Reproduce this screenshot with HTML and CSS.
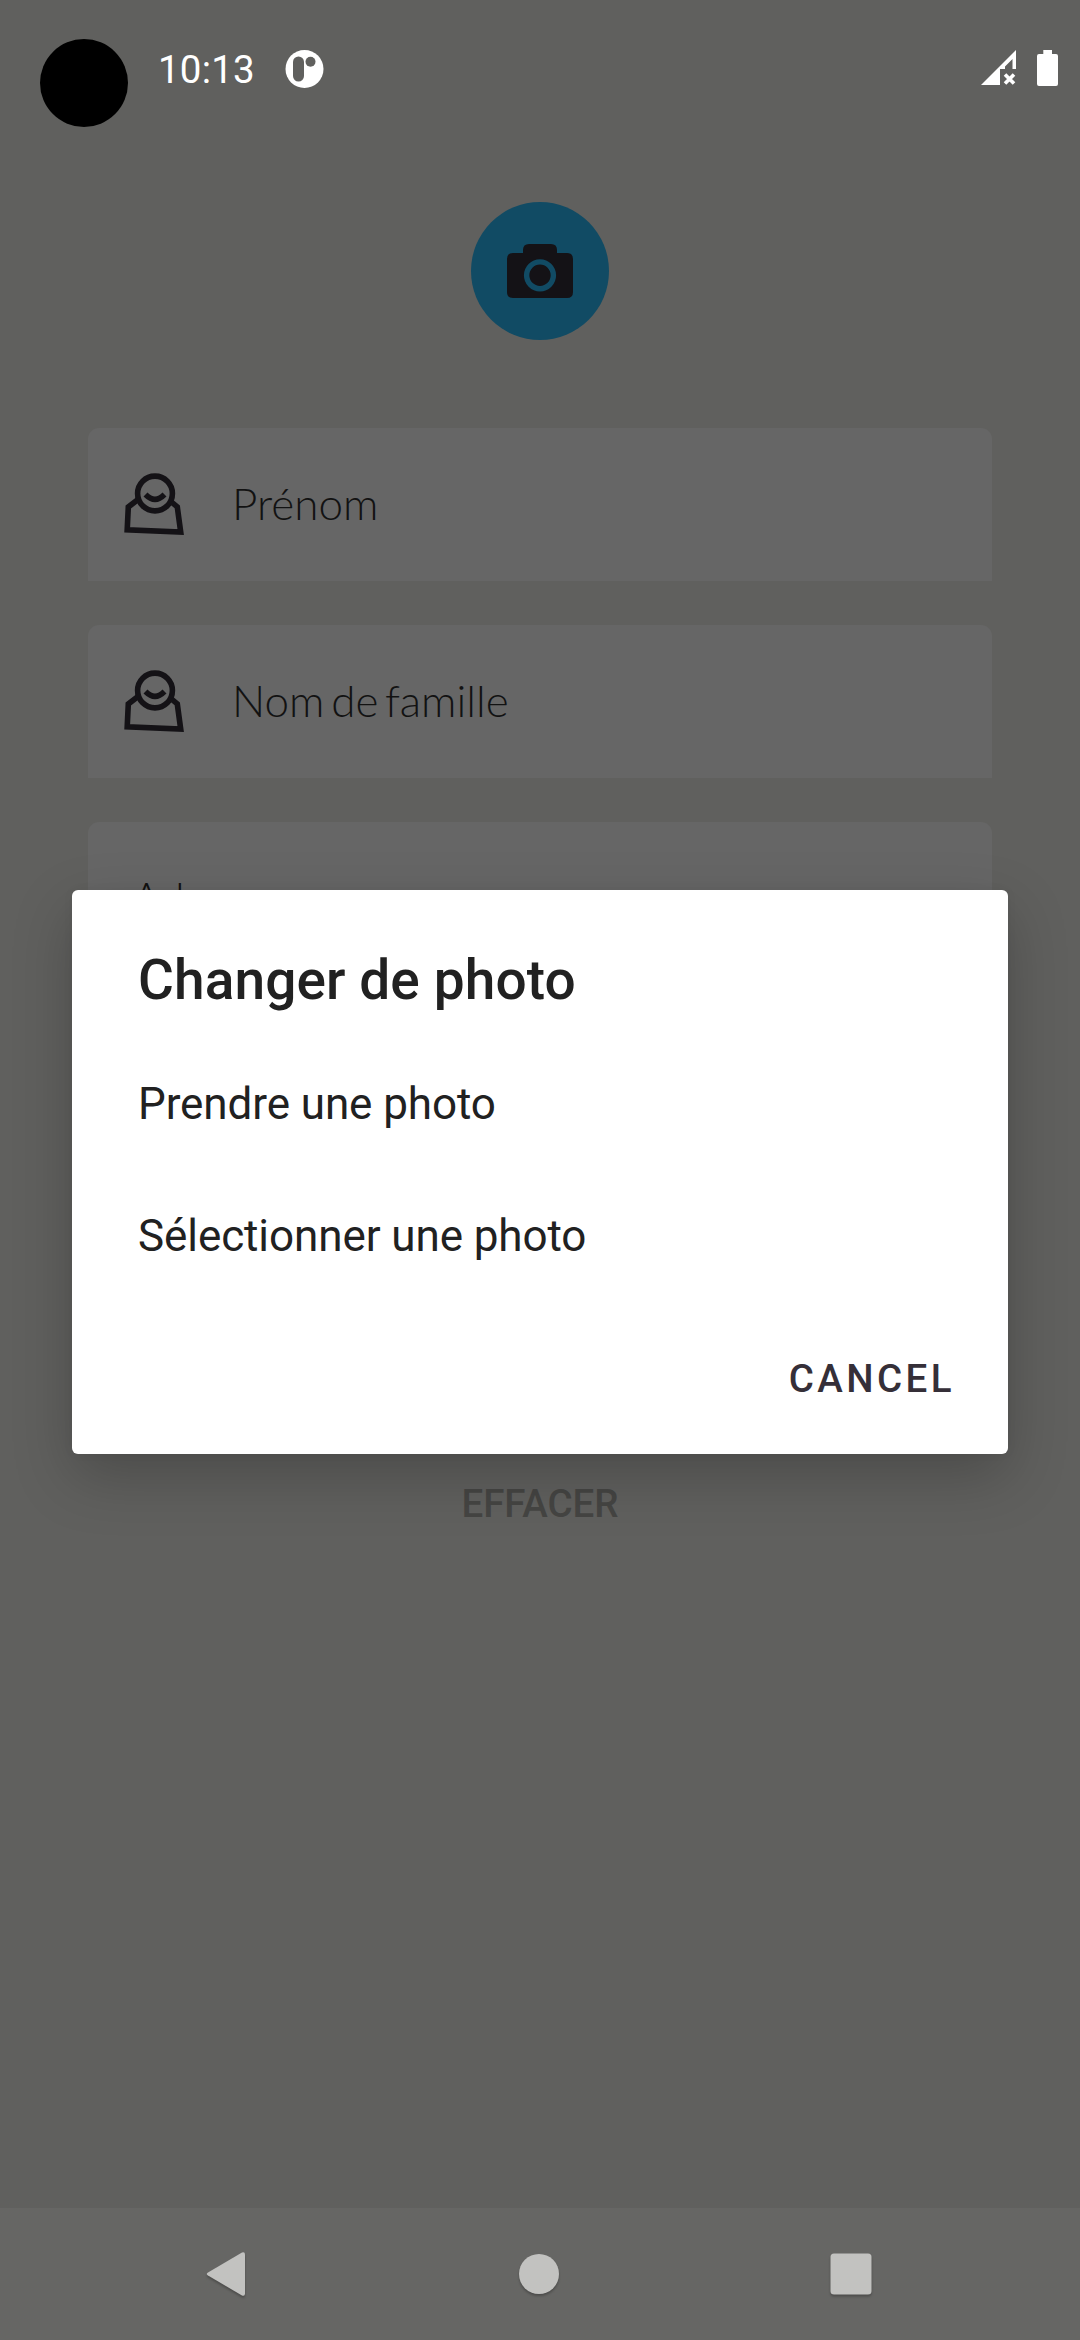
FILE: index.html
```html
<!DOCTYPE html>
<html lang="fr">
<head>
<meta charset="utf-8">
<title>Profil</title>
<link rel="stylesheet" href="styles.css">
</head>
<body>
<div class="screen">
  <header class="status">
    <span class="cutout"></span>
    <span class="clock">10:13</span>
    <svg class="notice" width="40" height="40" viewBox="0 0 40 40">
      <circle cx="19.500" cy="20" r="19" fill="#fff"/>
      <rect x="8" y="7.500" width="11" height="25" rx="5.500" fill="#60605e"/>
      <circle cx="25.500" cy="12.800" r="5" fill="#60605e"/>
    </svg>
    <svg class="signal" width="36" height="36" viewBox="0 0 36 36">
      <path d="M0 35 35 0V19H31.5V9L24 16.5V19H19V35Z" fill="#fff"/>
      <path d="M24 24.5 33 33.500M33 24.500 24 33.500" stroke="#fff" stroke-width="3.600"/>
    </svg>
    <svg class="battery" width="21" height="36" viewBox="0 0 21 36">
      <path d="M6.300 0H15V4H19Q21 4 21 6V34Q21 36 19 36H2Q0 36 0 34V6Q0 4 2 4H6.300Z" fill="#fff"/>
    </svg>
  </header>

  <main class="page">
    <div class="avatar">
      <svg width="138" height="138" viewBox="0 0 138 138">
        <path d="M58 42H80Q86 42 86 48V51H96Q102 51 102 57V90Q102 96 96 96H42Q36 96 36 90V57Q36 51 42 51H52V48Q52 42 58 42Z" fill="#141216"/>
        <circle cx="69" cy="73.300" r="13.400" fill="none" stroke="#114b64" stroke-width="5.400"/>
      </svg>
    </div>
    <form class="fields">
      <div class="field">
        <svg class="person" width="62" height="64" viewBox="0 0 62 64">
          <g fill="none" stroke="#141216" stroke-width="5.600">
            <circle cx="32" cy="20.500" r="17.400"/>
            <path d="M22.500 21.500Q32 31 41.500 21.500"/>
            <path d="M15 26.500 5.300 34 4.200 56.700 57.700 59 54.300 34 48.500 29"/>
          </g>
        </svg>
        <span>Prénom</span>
      </div>
      <div class="field">
        <svg class="person" width="62" height="64" viewBox="0 0 62 64">
          <g fill="none" stroke="#141216" stroke-width="5.600">
            <circle cx="32" cy="20.500" r="17.400"/>
            <path d="M22.500 21.500Q32 31 41.500 21.500"/>
            <path d="M15 26.500 5.300 34 4.200 56.700 57.700 59 54.300 34 48.500 29"/>
          </g>
        </svg>
        <span>Nom de famille</span>
      </div>
      <div class="field plain"><span>Adresse</span></div>
    </form>
    <div class="clear">EFFACER</div>
  </main>

  <nav class="nav">
    <svg width="54" height="54" viewBox="0 0 54 54">
      <path d="M9 25.500 43 5.500Q46 4.500 46 7.500V46.500Q46 49.500 43 48.500L9 28.500Q6.500 27 9 25.500Z"/>
    </svg>
    <svg width="54" height="54" viewBox="0 0 54 54"><circle cx="27" cy="27" r="20"/></svg>
    <svg width="54" height="54" viewBox="0 0 54 54"><rect x="6.500" y="6.500" width="41" height="41" rx="3.500"/></svg>
  </nav>

  <section class="dialog">
    <h1 class="title">Changer de photo</h1>
    <div class="option">Prendre une photo</div>
    <div class="option">Sélectionner une photo</div>
    <div class="actions"><span class="cancel">CANCEL</span></div>
  </section>
</div>
</body>
</html>
```
FILE: styles.css
```css
* { box-sizing: border-box; }
body { margin: 0; }
svg { display: block; flex: none; }

.screen {
  position: relative;
  display: flex;
  flex-direction: column;
  width: 1080px;
  height: 2340px;
  overflow: hidden;
  background: #60605e;
  font-family: Roboto, sans-serif;
}

.status {
  display: flex;
  align-items: center;
  height: 137px;
  padding: 0 22px 0 158px;
  color: #fff;
}
.cutout {
  position: absolute;
  left: 40px;
  top: 39px;
  width: 88px;
  height: 88px;
  border-radius: 50%;
  background: #000;
}
.clock { padding-top: 3px; font-size: 38.5px; line-height: 46px; letter-spacing: .2px; width: 127px; }
.signal { margin-left: auto; margin-right: 20px; margin-bottom: 2px; }
.battery { margin-bottom: 1px; }

.page { flex: 1; display: flex; flex-direction: column; align-items: center; padding-top: 65px; }
.avatar { width: 138px; height: 138px; border-radius: 50%; background: #114b64; }
.fields { display: flex; flex-direction: column; gap: 44px; width: 904px; margin: 88px 0 0; }
.field {
  display: flex;
  align-items: center;
  height: 153px;
  padding: 0 35px 3px;
  border-radius: 11px 11px 0 0;
  background: #666666;
  color: #121212;
  font: 300 44px/54px Lato, sans-serif;
  word-spacing: -5.3px;
}
.person { margin: 3px 47px 0 0; }
.plain { padding-left: 44px; }
.clear {
  margin-top: 506px;
  font-size: 38.5px;
  font-weight: 500;
  line-height: 46px;
  color: #454543;
}

.nav {
  display: flex;
  justify-content: space-between;
  align-items: flex-start;
  height: 132px;
  padding: 39px 202px 0 199px;
  background: #666664;
}
.nav svg { fill: #c2c2c0; filter: drop-shadow(0 2px 1px rgba(0, 0, 0, .25)); }

.dialog {
  position: absolute;
  left: 72px;
  top: 890px;
  width: 936px;
  height: 564px;
  padding: 58px 53px 0 66px;
  border-radius: 6px;
  background: #fff;
  color: #212121;
  box-shadow: 0 22px 60px rgba(0, 0, 0, .22), 0 0 12px rgba(0, 0, 0, .04);
}
.title { margin: 0 0 26px; font-size: 55px; font-weight: 500; line-height: 64px; letter-spacing: .1px; }
.option { height: 132px; font-size: 44px; line-height: 132px; letter-spacing: -.09px; }
.actions { display: flex; justify-content: flex-end; padding-top: 54px; }
.cancel {
  font-size: 38.5px;
  font-weight: 500;
  line-height: 46px;
  letter-spacing: 3.44px;
  color: #352f38;
}
```
